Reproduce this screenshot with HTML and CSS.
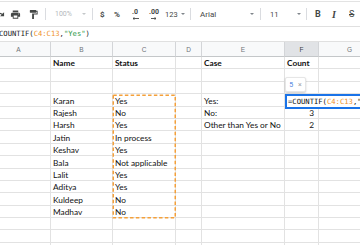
FILE: index.html
```html
<!DOCTYPE html>
<html lang="en">
<head>
    <meta charset="UTF-8">
    <meta name="viewport" content="width=device-width, initial-scale=1.0">
    <title>COUNTIF</title>
    <link rel="stylesheet" href="styles.css">
</head>
<body>
    <div class="sheet">
        <!-- Toolbar -->
        <div class="toolbar">
            <svg class="tb-icon redo" viewBox="0 0 24 24"><path d="M18.4 10.6C16.55 8.99 14.15 8 11.5 8c-4.65 0-8.58 3.03-9.96 7.22L3.9 16c1.05-3.19 4.050-5.5 7.6-5.5 1.95 0 3.73.72 5.12 1.88L13 16h9V7l-3.6 3.6z"/></svg>
            <svg class="tb-icon" viewBox="0 0 24 24"><path d="M19 8H5c-1.66 0-3 1.34-3 3v6h4v4h12v-4h4v-6c0-1.66-1.34-3-3-3zm-3 11H8v-5h8v5zm3-7c-.55 0-1-.45-1-1s.45-1 1-1 1 .45 1 1-.45 1-1 1zm-1-9H6v4h12V3z"/></svg>
            <svg class="tb-icon" viewBox="0 0 24 24"><path d="M18 4V3c0-.55-.45-1-1-1H5c-.55 0-1 .45-1 1v4c0 .55.45 1 1 1h12c.55 0 1-.45 1-1V6h1v4H9v11c0 .55.45 1 1 1h2c.55 0 1-.45 1-1v-9h8V4h-3z"/></svg>
            <span class="tb-sep"></span>
            <span class="tb-drop zoom"><span class="muted">100%</span><i class="caret"></i></span>
            <span class="tb-sep"></span>
            <span class="tb-text">$</span>
            <span class="tb-text">%</span>
            <span class="tb-dec">
                <span>.0</span>
                <svg viewBox="0 0 8 3"><path d="M1 1.5h6M1 1.5l1.5-1.2M1 1.5l1.5 1.2"/></svg>
            </span>
            <span class="tb-dec">
                <span>.00</span>
                <svg viewBox="0 0 8 3"><path d="M2 1.5h5M7 1.5l-1.5-1.2M7 1.5l-1.5 1.2"/></svg>
            </span>
            <span class="tb-drop fmt"><span>123</span><i class="caret"></i></span>
            <span class="tb-sep"></span>
            <span class="tb-drop font"><span>Arial</span><i class="caret"></i></span>
            <span class="tb-sep"></span>
            <span class="tb-drop size"><span>11</span><i class="caret"></i></span>
            <span class="tb-sep"></span>
            <span class="tb-text bold">B</span>
            <span class="tb-text italic">I</span>
            <span class="tb-text strike">S</span>
        </div>

        <!-- Formula bar -->
        <div class="formula-bar">COUNTIF(<span class="ref">C4:C13</span>,<span class="str">"Yes"</span>)</div>

        <!-- Grid -->
        <div class="grid">
            <div class="cells" id="cells"></div>

            <!-- Copy range C4:C13 -->
            <svg class="marquee" viewBox="0 0 65 125">
                <rect x="1.25" y="1.25" width="62" height="122.5"/>
            </svg>

            <!-- Preview result -->
            <div class="preview"><span class="preview-val">5</span><span class="preview-x">×</span></div>

            <!-- Cell editor F4 -->
            <div class="editor">=COUNTIF(<span class="ref">C4:C13</span>,"</div>
        </div>
    </div>

    <script>
        const columns = ['A', 'B', 'C', 'D', 'E', 'F', 'G'];

        // Isi sel per baris (kolom A sampai G)
        const rows = [
            ['', 'Name', 'Status', '', 'Case', 'Count', ''],
            [],
            [],
            ['', 'Karan', 'Yes', '', 'Yes:', '', ''],
            ['', 'Rajesh', 'No', '', 'No:', '3', ''],
            ['', 'Harsh', 'Yes', '', 'Other than Yes or No', '2', ''],
            ['', 'Jatin', 'In process'],
            ['', 'Keshav', 'Yes'],
            ['', 'Bala', 'Not applicable'],
            ['', 'Lalit', 'Yes'],
            ['', 'Aditya', 'Yes'],
            ['', 'Kuldeep', 'No'],
            ['', 'Madhav', 'No'],
            [],
            [],
            []
        ];

        const cells = document.getElementById('cells');
        let html = '';

        columns.forEach(col => {
            html += `<div class="head${col === 'F' ? ' active' : ''}">${col}</div>`;
        });

        rows.forEach((row, r) => {
            columns.forEach((col, c) => {
                const value = row[c] || '';
                let cls = 'cell';
                if (r === 0) cls += ' bold';
                if (col === 'F' && r > 0) cls += ' num';
                html += `<div class="${cls}">${value}</div>`;
            });
        });

        cells.innerHTML = html;
    </script>
</body>
</html>
```

FILE: styles.css
```css
body {
    margin: 0;
    width: 360px;
    height: 245px;
    overflow: hidden;
    background: #fff;
    font-family: Roboto, Arial, sans-serif;
}
.sheet {
    padding-top: 1px;
}
/* Toolbar */
.toolbar {
    display: grid;
    grid-template-columns: 16px 18px 17px 10px 37px 8px 14px 18px 17px 16px 25px 10px 60px 10px 36px 9px 17px 17px 12px;
    align-items: center;
    height: 24px;
    margin-left: -6px;
    border-top: 1px solid #e3e3e3;
    border-bottom: 1px solid #e0e0e0;
    color: #444746;
    font-size: 8px;
    white-space: nowrap;
}
.tb-icon {
    width: 11px;
    height: 11px;
    fill: #444746;
}
.tb-sep {
    width: 1px;
    height: 12px;
    background: #dadce0;
}
.tb-drop {
    display: flex;
    align-items: center;
    justify-content: space-between;
}
.tb-drop.zoom { width: 31px; font-size: 7px; }
.tb-drop.fmt { width: 20px; font-size: 7.5px; }
.tb-drop.font { width: 54px; font-size: 8px; }
.tb-drop.size { width: 31px; font-size: 7.5px; }
.muted {
    color: #b4b7bb;
}
.caret {
    width: 0;
    height: 0;
    border-left: 2.5px solid transparent;
    border-right: 2.5px solid transparent;
    border-top: 2.5px solid #80868b;
}
.zoom .caret {
    border-top-color: #c4c7c9;
}
.tb-text {
    font-size: 8px;
    font-weight: bold;
}
.tb-dec {
    display: flex;
    flex-direction: column;
    align-items: flex-start;
    font-size: 7px;
    font-weight: bold;
    line-height: 7px;
}
.tb-dec svg {
    width: 8px;
    height: 3px;
    margin-top: 1px;
    fill: none;
    stroke: #444746;
    stroke-width: 0.9;
}
.tb-text.italic {
    font-family: "Liberation Serif", serif;
    font-style: italic;
    font-size: 10px;
}
.tb-text.strike {
    font-size: 9px;
    font-weight: normal;
    text-decoration: line-through;
}
.tb-text.bold {
    font-size: 9px;
}
/* Formula bar */
.formula-bar {
    height: 14px;
    line-height: 14px;
    border-bottom: 1px solid #e0e0e0;
    margin-left: -1px;
    font-family: "DejaVu Sans Mono", monospace;
    font-size: 7.2px;
    color: #202124;
    white-space: nowrap;
}
.ref {
    color: #f0932b;
}
.str {
    color: #2f9a48;
}
/* Grid */
.grid {
    position: relative;
}
.cells {
    display: grid;
    grid-template-columns: 64px 62px 63px 26px 83px 34px 62px;
    grid-template-rows: 15px;
    grid-auto-rows: 12.4px;
    margin-left: -13px;
}
.head {
    display: flex;
    align-items: center;
    justify-content: center;
    background: #f8f9fa;
    border-right: 1px solid #d3d5d8;
    border-bottom: 1px solid #c4c7c9;
    color: #6f7377;
    font-family: Arial, sans-serif;
    font-size: 6.5px;
}
.head.active {
    background: #e1e3e6;
    color: #3c4043;
}
.cell {
    display: flex;
    align-items: flex-end;
    padding: 0 2px;
    border-right: 1px solid #e2e2e2;
    border-bottom: 1px solid #e2e2e2;
    font-family: Lato, sans-serif;
    font-size: 8.3px;
    line-height: 10px;
    color: #111;
    white-space: nowrap;
    overflow: visible;
}
.cell.bold {
    font-weight: bold;
}
.cell.num {
    justify-content: flex-end;
    padding-right: 4px;
}
.marquee {
    position: absolute;
    left: 112px;
    top: 52px;
    width: 65px;
    height: 125px;
    fill: none;
    stroke: #f4a03a;
    stroke-width: 1.5;
    stroke-dasharray: 3.5 2.3;
}
.preview {
    position: absolute;
    left: 285px;
    top: 35px;
    width: 17px;
    height: 13px;
    display: flex;
    align-items: center;
    justify-content: space-around;
    padding: 0 1px;
    background: #fff;
    border: 1px solid #e6e6e6;
    border-radius: 2px;
    box-shadow: 0 1px 2px rgba(0, 0, 0, 0.2);
    font-size: 7px;
}
.preview-val {
    color: #4a7fe0;
}
.preview-x {
    color: #a0a4a8;
    font-size: 7px;
}
.editor {
    position: absolute;
    left: 285px;
    top: 52px;
    width: 90px;
    height: 11px;
    border: 2px solid #1a73e8;
    background: #fff;
    padding-left: 1px;
    font-family: "DejaVu Sans Mono", monospace;
    font-size: 7.2px;
    line-height: 11px;
    color: #111;
    white-space: nowrap;
}
```
